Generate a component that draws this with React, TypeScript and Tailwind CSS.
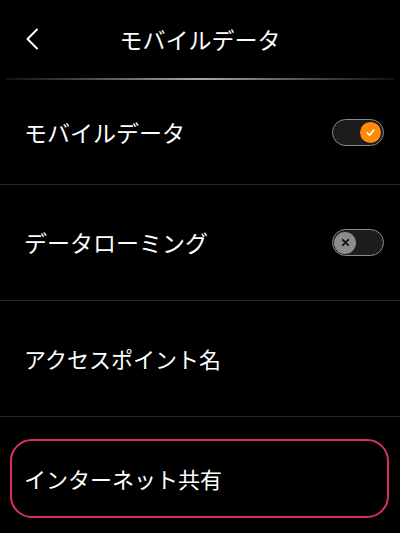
import React from "react";

const font = { fontFamily: '"Noto Sans CJK JP", "Noto Sans", sans-serif' };

function ToggleOn() {
  return (
    <div className="w-[52px] h-[27px] rounded-full border-[1.5px] border-[#8a8a8a] bg-[#1c1c1c] flex items-center justify-end pr-[2px]">
      <div className="w-[21px] h-[21px] rounded-full bg-[#ff8a0a] flex items-center justify-center">
        <svg width="11" height="11" viewBox="0 0 12 12" fill="none">
          <path d="M2.5 6.5 L5 9 L9.5 3.5" stroke="white" strokeWidth="1.8" strokeLinecap="round" strokeLinejoin="round" />
        </svg>
      </div>
    </div>
  );
}

function ToggleOff() {
  return (
    <div className="w-[52px] h-[27px] rounded-full border-[1.5px] border-[#8a8a8a] bg-[#1c1c1c] flex items-center justify-start pl-[1px]">
      <div className="w-[22px] h-[22px] rounded-full bg-[#8c8c8c] flex items-center justify-center">
        <svg width="9" height="9" viewBox="0 0 10 10" fill="none">
          <path d="M2 2 L8 8 M8 2 L2 8" stroke="#111" strokeWidth="2" strokeLinecap="round" />
        </svg>
      </div>
    </div>
  );
}

export default function App() {
  return (
    <div className="w-[400px] h-[533px] bg-black text-white overflow-hidden" style={font}>
      <div className="h-[78px] flex items-center relative">
        <div className="pl-[25px]">
          <svg width="14" height="22" viewBox="0 0 14 22" fill="none">
            <path d="M12 1.5 L2.5 11 L12 20.5" stroke="white" strokeWidth="2" strokeLinecap="round" strokeLinejoin="round" />
          </svg>
        </div>
        <div className="absolute inset-x-0 top-[19px] text-center text-[23px] leading-[40px] pointer-events-none">
          モバイルデータ
        </div>
      </div>
      <div className="mx-[6px] h-[2px] bg-gradient-to-r from-[#111] via-[#a8a8a8] to-[#111]" />
      <div className="h-[105px] flex items-center justify-between pl-[24px] pr-[16px] border-b border-[#2a2a2a]">
        <span className="text-[23px]">モバイルデータ</span>
        <ToggleOn />
      </div>
      <div className="h-[116px] flex items-center justify-between pl-[24px] pr-[16px] border-b border-[#2a2a2a]">
        <span className="text-[23px]">データローミング</span>
        <ToggleOff />
      </div>
      <div className="h-[116px] flex items-center justify-between pl-[24px] pr-[16px] border-b border-[#2a2a2a]">
        <span className="text-[22px]">アクセスポイント名</span>
      </div>
      <div className="pt-[22px] pl-[10px] pr-[11px]">
        <div className="h-[79px] rounded-[22px] border-[2.5px] border-[#d8325a] flex items-center pl-[12px]">
          <span className="text-[22px]">インターネット共有</span>
        </div>
      </div>
    </div>
  );
}
